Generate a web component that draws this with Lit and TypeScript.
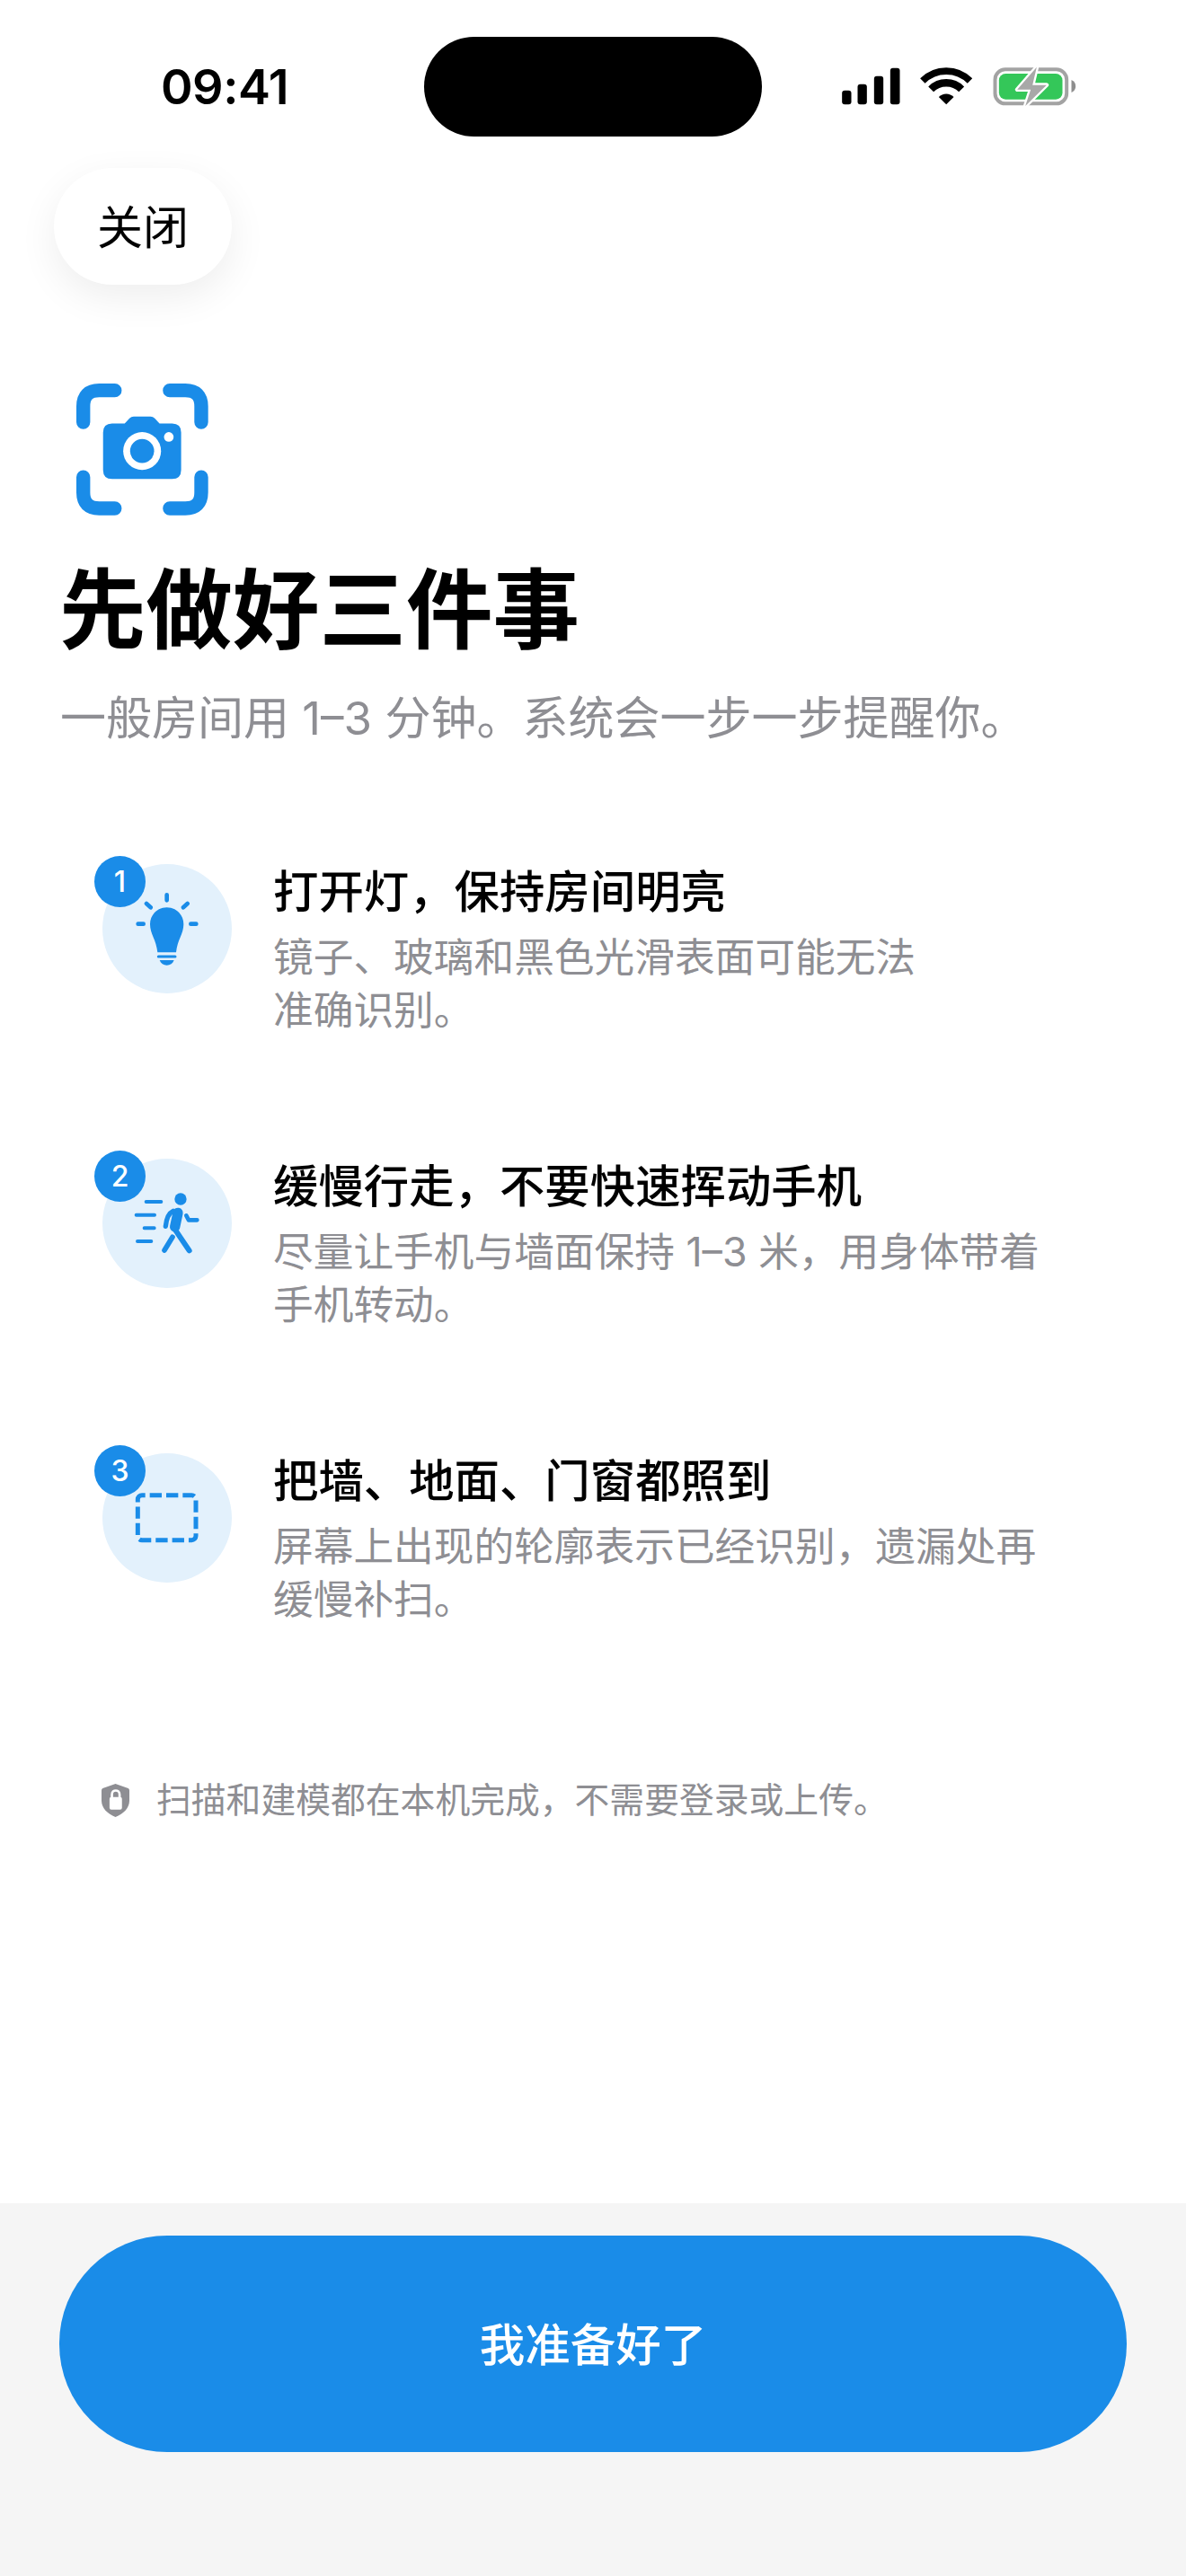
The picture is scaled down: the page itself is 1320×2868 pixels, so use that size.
import { LitElement, html, css, svg } from "lit"
import { customElement } from "lit/decorators.js"

const bulb = svg`
  <g stroke="#1a8ce8" stroke-width="14" stroke-linecap="round" fill="none">
    <path d="M287 170V188M219 199L233 212M356 199L342 212M191 267H209M367 267H385" />
  </g>
  <path fill="#1a8ce8" d="M287 212C318 212 343 236 343 268C343 300 322 320 318 362H256C252 320 231 300 231 268C231 236 256 212 287 212Z" />
  <path stroke="#1a8ce8" stroke-width="9" stroke-linecap="round" d="M259 376H315" />
  <path fill="#1a8ce8" d="M263 388H311C307 399 298 405 287 405C276 405 267 399 263 388Z" />
`

const walker = svg`
  <g stroke="#1a8ce8" stroke-width="12" stroke-linecap="round" fill="none">
    <path d="M218 204H268M185 248H246M212 292H245M189 336H235" />
  </g>
  <circle cx="333" cy="195" r="20" fill="#1a8ce8" />
  <g stroke="#1a8ce8" stroke-linecap="round" stroke-linejoin="round" fill="none">
    <path stroke-width="34" d="M324 241L314 288" />
    <path stroke-width="16" d="M308 235Q287 245 283 286" />
    <path stroke-width="18" d="M314 296L334 326L362 367" />
    <path stroke-width="17" d="M306 322L279 366" />
    <path stroke-width="14" d="M352 250L360 265H388" />
  </g>
`

const frame = svg`
  <rect x="190" y="225" width="194" height="150" rx="14" fill="none" stroke="#1a8ce8" stroke-width="15"
    stroke-dasharray="40 15" stroke-dashoffset="-26" />
`

const steps = [
  {
    icon: bulb,
    top: 67,
    title: "打开灯，保持房间明亮",
    lines: ["镜子、玻璃和黑色光滑表面可能无法", "准确识别。"],
  },
  {
    icon: walker,
    top: 60,
    title: "缓慢行走，不要快速挥动手机",
    lines: ["尽量让手机与墙面保持 1–3 米，用身体带着", "手机转动。"],
  },
  {
    icon: frame,
    top: 85,
    title: "把墙、地面、门窗都照到",
    lines: ["屏幕上出现的轮廓表示已经识别，遗漏处再", "缓慢补扫。"],
  },
]

@customElement("app-root")
export class AppRoot extends LitElement {
  static styles = css`
    :host {
      display: flex;
      flex-direction: column;
      width: 1320px;
      min-height: 2868px;
      background: #fff;
      color: #000;
      font-family: Inter, "Noto Sans CJK SC", sans-serif;
    }

    .status {
      display: flex;
      align-items: center;
      padding: 41px 0 0 179px;
    }
    .time {
      width: 293px;
      font-size: 54px;
      font-weight: 600;
      line-height: 111px;
      letter-spacing: -0.5px;
    }
    .island {
      width: 376px;
      height: 111px;
      margin-right: 85px;
      border-radius: 56px;
      background: #000;
    }
    .status-icons {
      display: block;
      width: 267px;
      height: 47px;
    }

    .close {
      align-self: flex-start;
      margin: 35px 0 0 60px;
      width: 198px;
      height: 130px;
      display: flex;
      align-items: center;
      justify-content: center;
      padding-bottom: 4px;
      box-sizing: border-box;
      border-radius: 65px;
      background: #fff;
      box-shadow: 0 14px 44px rgba(0, 0, 0, 0.07);
      font-size: 51px;
    }

    .hero-icon {
      display: block;
      width: 147px;
      height: 147px;
      margin: 110px 0 0 85px;
    }
    h1 {
      margin: 45px 0 0 66px;
      font-size: 96.5px;
      line-height: 120px;
      font-weight: 700;
    }
    .lead {
      margin: 31px 0 0 67px;
      font-size: 51px;
      line-height: 60px;
      color: #8e8e93;
    }

    .steps {
      display: flex;
      flex-direction: column;
      gap: 184px;
      margin: 132px 0 0 114px;
    }
    .step {
      display: flex;
      gap: 46px;
      height: 144px;
    }
    .disc {
      position: relative;
      flex: none;
      width: 144px;
      height: 144px;
      border-radius: 50%;
      background: #e3f1fc;
    }
    .disc svg {
      display: block;
      width: 144px;
      height: 144px;
    }
    .badge {
      position: absolute;
      left: -9px;
      top: -9px;
      width: 57px;
      height: 57px;
      display: flex;
      align-items: center;
      justify-content: center;
      border-radius: 50%;
      background: #1a8ce8;
      color: #fff;
      font-size: 32px;
      font-weight: 500;
    }
    .step h2 {
      margin: 1px 0 0;
      font-size: 50.4px;
      line-height: 60px;
      font-weight: 500;
      white-space: nowrap;
    }
    .step p {
      margin: 14px 0 0;
      font-size: 44.7px;
      line-height: 59px;
      color: #8e8e93;
      white-space: nowrap;
    }

    .privacy {
      display: flex;
      align-items: center;
      gap: 30px;
      margin: 217px 0 0 113px;
      font-size: 38.8px;
      line-height: 50px;
      color: #8e8e93;
    }
    .privacy svg {
      display: block;
      width: 31px;
      height: 37px;
    }

    .footer {
      margin-top: auto;
      padding: 36px 66px 138px;
      background: #f5f5f5;
    }
    .cta {
      height: 241px;
      box-sizing: border-box;
      padding-bottom: 5px;
      display: flex;
      align-items: center;
      justify-content: center;
      border-radius: 120px;
      background: #1a8ce8;
      color: #fff;
      font-size: 50.5px;
      font-weight: 500;
    }
  `

  renderStatusIcons() {
    return html`<svg class="status-icons" viewBox="100 70 800 141">
      <g fill="#000">
        <rect x="112" y="153" width="31" height="47" rx="9" />
        <rect x="164" y="132" width="31" height="68" rx="9" />
        <rect x="219" y="105" width="31" height="95" rx="9" />
        <rect x="273" y="78" width="32" height="122" rx="9" />
        <path d="M460 200L435 175A35 35 0 0 1 485 175Z" />
      </g>
      <g fill="none" stroke="#000">
        <path stroke-width="23" d="M381 121A111.5 111.5 0 0 1 539 121" />
        <path stroke-width="25" d="M409 149A72 72 0 0 1 511 149" />
      </g>
      <rect x="623" y="83" width="239" height="114" rx="34" fill="none" stroke="#a3a3a3" stroke-width="12" />
      <path d="M878 118Q892 124 892 139Q892 154 878 160Z" fill="#8e8e8e" />
      <rect x="636" y="97" width="212" height="86" rx="22" fill="#34c759" />
      <path d="M762 75L697 150H742L724 205L795 135H748Z" fill="#a8a8a8" stroke="#fff" stroke-width="14"
        stroke-linejoin="round" paint-order="stroke" />
    </svg>`
  }

  renderCamera() {
    return html`<svg class="hero-icon" viewBox="75 82 440 440">
      <g fill="none" stroke="#1a8ce8" stroke-width="46" stroke-linecap="round">
        <path d="M98 211V158Q98 105 151 105H203" />
        <path d="M386 105H438Q491 105 491 158V211" />
        <path d="M98 394V445Q98 498 151 498H203" />
        <path d="M386 498H438Q491 498 491 445V394" />
      </g>
      <path fill="#1a8ce8"
        d="M194 215H236L252 198Q258 192 266 192H322Q330 192 336 198L352 215H394Q424 215 424 245V370Q424 400 394 400H194Q164 400 164 370V245Q164 215 194 215Z" />
      <circle cx="294" cy="307" r="63" fill="#fff" />
      <circle cx="294" cy="307" r="40" fill="#1a8ce8" />
      <circle cx="383" cy="260" r="16" fill="#fff" />
    </svg>`
  }

  render() {
    return html`
      <div class="status">
        <span class="time">09:41</span>
        <div class="island"></div>
        ${this.renderStatusIcons()}
      </div>

      <div class="close">关闭</div>

      ${this.renderCamera()}
      <h1>先做好三件事</h1>
      <div class="lead">一般房间用 1–3 分钟。系统会一步一步提醒你。</div>

      <div class="steps">
        ${steps.map(
          (step, i) => html`
            <div class="step">
              <div class="disc">
                <svg viewBox="72 ${step.top} 432 432">${step.icon}</svg>
                <span class="badge">${i + 1}</span>
              </div>
              <div>
                <h2>${step.title}</h2>
                <p>${step.lines[0]}<br />${step.lines[1]}</p>
              </div>
            </div>
          `
        )}
      </div>

      <div class="privacy">
        <svg viewBox="68 78 94 112">
          <path fill="#8e8e93"
            d="M115 78L158 93Q162 95 162 100V135C162 160 142 180 115 190C88 180 68 160 68 135V100Q68 95 72 93Z" />
          <path fill="none" stroke="#fff" stroke-width="8" d="M103 125V114C103 96 129 96 129 114V125" />
          <rect x="95" y="123" width="42" height="42" rx="6" fill="#fff" />
        </svg>
        <span>扫描和建模都在本机完成，不需要登录或上传。</span>
      </div>

      <div class="footer">
        <div class="cta">我准备好了</div>
      </div>
    `
  }
}
